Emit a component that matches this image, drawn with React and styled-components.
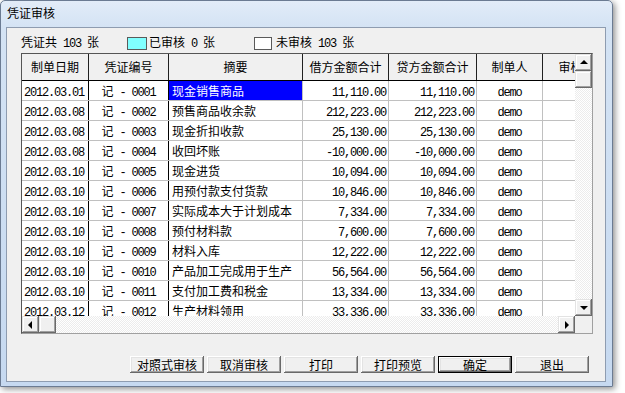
import React from "react";
import styled, { createGlobalStyle, css } from "styled-components";

const GlobalStyle = createGlobalStyle`
  html, body { margin: 0; padding: 0; background: #fff; }
  body {
    font-family: "Noto Sans CJK SC", "Liberation Sans", sans-serif;
    font-size: 12px;
    color: #000;
  }
`;

const Screen = styled.div`
  width: 625px;
  height: 393px;
  overflow: hidden;
  background: #fff;
`;

const Window = styled.div`
  box-sizing: border-box;
  width: 613px;
  height: 387px;
  border: 1px solid #6b7b92;
  border-radius: 5px 5px 0 0;
  background: linear-gradient(to bottom, #e2ecf8 0, #d4e3f4 26px, #c6d9f0 100%);
  box-shadow: 2px 2px 6px rgba(0, 0, 0, 0.45);
  padding: 0 6px 4px 5px;
  display: flex;
  flex-direction: column;
`;

const TitleBar = styled.div`
  height: 26px;
  line-height: 24px;
  padding-left: 1px;
  font-size: 12px;
  color: #000;
  flex: none;
`;

const Client = styled.div`
  box-sizing: border-box;
  height: 355px;
  border: 1px solid #8e9cb0;
  background: #f0f0f0;
  padding: 8px 0 0 14px;
  display: flex;
  flex-direction: column;
`;

const LegendRow = styled.div`
  height: 14px;
  display: flex;
  align-items: center;
  line-height: 14px;
  white-space: nowrap;
`;

const Swatch = styled.span`
  box-sizing: border-box;
  width: ${(p) => p.$w}px;
  height: 13px;
  margin-left: ${(p) => p.$ml}px;
  margin-right: ${(p) => p.$mr}px;
  background: ${(p) => p.$color};
  border: 1px solid #5a5a5a;
  flex: none;
`;

const Mono = styled.span`
  font-family: "Liberation Mono", "DejaVu Sans Mono", monospace;
  font-size: 12px;
  letter-spacing: -1.2px;
  white-space: pre;
`;

const GridFrame = styled.div`
  box-sizing: border-box;
  margin-top: 3px;
  width: 572px;
  height: 281px;
  border: 1px solid;
  border-color: #555 #a0a0a0 #a0a0a0 #555;
  display: flex;
  flex-direction: column;
  background: #fff;
`;

const GridBody = styled.div`
  display: flex;
  height: 262px;
`;

const Viewport = styled.div`
  flex: 1;
  overflow: hidden;
  background: #fff;
`;

const HeaderRow = styled.div`
  display: flex;
  width: max-content;
  height: 27px;
  border-bottom: 1px solid #000;
  box-sizing: border-box;
  background: #f0f0f0;
`;

const HeaderCell = styled.div`
  box-sizing: border-box;
  width: ${(p) => p.$w}px;
  flex: none;
  border-right: 1px solid #202020;
  line-height: 26px;
  text-align: center;
  white-space: nowrap;
  overflow: hidden;
`;

const DataRow = styled.div`
  display: flex;
  width: max-content;
  height: 20px;
  box-sizing: border-box;
  border-bottom: 1px solid #c0c0c0;
`;

const Cell = styled.div`
  box-sizing: border-box;
  width: ${(p) => p.$w}px;
  flex: none;
  height: 19px;
  line-height: 19px;
  border-right: 1px solid ${(p) => (p.$dark ? "#000" : "#c0c0c0")};
  text-align: ${(p) => p.$align || "left"};
  padding: 0 ${(p) => (p.$align === "right" ? 2 : 0)}px 0
    ${(p) => (p.$align === "left" ? p.$pl || 2 : 0)}px;
  white-space: nowrap;
  overflow: hidden;
  background: #fff;
  color: #000;
  ${(p) =>
    p.$selected &&
    css`
      background: #0000ff;
      color: #fff;
    `}
`;

const VScroll = styled.div`
  width: 17px;
  flex: none;
  display: flex;
  flex-direction: column;
`;

const HScrollRow = styled.div`
  display: flex;
  height: 17px;
`;

const HScroll = styled.div`
  flex: 1;
  display: flex;
`;

const ScrollPart = styled.div`
  box-sizing: border-box;
  width: 17px;
  height: 17px;
  flex: none;
  background: #f0f0f0;
  box-shadow: inset -1px -1px #696969, inset 1px 1px #e3e3e3,
    inset -2px -2px #a0a0a0, inset 2px 2px #fff;
  display: flex;
  align-items: center;
  justify-content: center;
`;

const Track = styled.div`
  flex: 1;
  background-color: #fff;
  background-image: repeating-conic-gradient(#ececec 0 25%, #fff 0 50%);
  background-size: 2px 2px;
`;

const Corner = styled.div`
  width: 17px;
  height: 17px;
  flex: none;
  background: #f0f0f0;
`;

const Arrow = styled.span`
  width: 0;
  height: 0;
  ${(p) =>
    p.$dir === "up" &&
    css`
      border-left: 4px solid transparent;
      border-right: 4px solid transparent;
      border-bottom: 4px solid #000;
      margin-top: -1px;
    `}
  ${(p) =>
    p.$dir === "down" &&
    css`
      border-left: 4px solid transparent;
      border-right: 4px solid transparent;
      border-top: 4px solid #000;
    `}
  ${(p) =>
    p.$dir === "left" &&
    css`
      border-top: 4px solid transparent;
      border-bottom: 4px solid transparent;
      border-right: 4px solid #000;
      margin-left: -1px;
    `}
  ${(p) =>
    p.$dir === "right" &&
    css`
      border-top: 4px solid transparent;
      border-bottom: 4px solid transparent;
      border-left: 4px solid #000;
    `}
`;

const ButtonRow = styled.div`
  margin-top: 22px;
  padding-right: 16px;
  display: flex;
  justify-content: flex-end;
  gap: 3px;
`;

const Button = styled.button`
  box-sizing: border-box;
  width: 74px;
  height: 17px;
  margin: 0;
  padding: 0;
  border: none;
  background: #f0f0f0;
  font-family: "Noto Sans CJK SC", sans-serif;
  font-size: 12px;
  line-height: 15px;
  color: #000;
  box-shadow: inset -1px -1px #696969, inset 1px 1px #fff,
    inset -2px -2px #a0a0a0, inset 2px 2px #e3e3e3;
  ${(p) =>
    p.$default &&
    css`
      border: 1px solid #000;
    `}
`;

const columns = [
  { title: "制单日期", w: 67 },
  { title: "凭证编号", w: 80 },
  { title: "摘要", w: 134 },
  { title: "借方金额合计", w: 86 },
  { title: "贷方金额合计", w: 88 },
  { title: "制单人", w: 66 },
  { title: "审核", w: 56 },
];

const rows = [
  ["2012.03.01", "0001", "现金销售商品", "11,110.00"],
  ["2012.03.08", "0002", "预售商品收余款", "212,223.00"],
  ["2012.03.08", "0003", "现金折扣收款", "25,130.00"],
  ["2012.03.08", "0004", "收回坏账", "-10,000.00"],
  ["2012.03.10", "0005", "现金进货", "10,094.00"],
  ["2012.03.10", "0006", "用预付款支付货款", "10,846.00"],
  ["2012.03.10", "0007", "实际成本大于计划成本", "7,334.00"],
  ["2012.03.10", "0008", "预付材料款", "7,600.00"],
  ["2012.03.10", "0009", "材料入库", "12,222.00"],
  ["2012.03.10", "0010", "产品加工完成用于生产", "56,564.00"],
  ["2012.03.10", "0011", "支付加工费和税金", "13,334.00"],
  ["2012.03.12", "0012", "生产材料领用", "33,336.00"],
];

const buttons = ["对照式审核", "取消审核", "打印", "打印预览", "确定", "退出"];

export default function App() {
  return (
    <Screen>
      <GlobalStyle />
      <Window>
        <TitleBar>凭证审核</TitleBar>
        <Client>
          <LegendRow>
            <span>
              凭证共<Mono> 103 </Mono>张
            </span>
            <Swatch $w={20} $ml={28} $mr={2} $color="#80ffff" />
            <span>
              已审核<Mono> 0 </Mono>张
            </span>
            <Swatch $w={18} $ml={39} $mr={4} $color="#fff" />
            <span>
              未审核<Mono> 103 </Mono>张
            </span>
          </LegendRow>

          <GridFrame>
            <GridBody>
              <Viewport>
                <HeaderRow>
                  {columns.map((c) => (
                    <HeaderCell key={c.title} $w={c.w}>
                      {c.title}
                    </HeaderCell>
                  ))}
                </HeaderRow>
                {rows.map(([date, no, memo, amount], i) => (
                  <DataRow key={no}>
                    <Cell $w={67} $dark $align="left" $pl={2}>
                      <Mono>{date}</Mono>
                    </Cell>
                    <Cell $w={80} $dark $align="center">
                      记<Mono> - {no}</Mono>
                    </Cell>
                    <Cell $w={134} $align="left" $pl={3} $selected={i === 0}>
                      {memo}
                    </Cell>
                    <Cell $w={86} $align="right">
                      <Mono>{amount}</Mono>
                    </Cell>
                    <Cell $w={88} $align="right">
                      <Mono>{amount}</Mono>
                    </Cell>
                    <Cell $w={66} $align="center">
                      <Mono>demo</Mono>
                    </Cell>
                    <Cell $w={56} $align="center" />
                  </DataRow>
                ))}
              </Viewport>
              <VScroll>
                <ScrollPart>
                  <Arrow $dir="up" />
                </ScrollPart>
                <ScrollPart />
                <Track />
                <ScrollPart>
                  <Arrow $dir="down" />
                </ScrollPart>
              </VScroll>
            </GridBody>
            <HScrollRow>
              <HScroll>
                <ScrollPart>
                  <Arrow $dir="left" />
                </ScrollPart>
                <ScrollPart />
                <Track />
                <ScrollPart>
                  <Arrow $dir="right" />
                </ScrollPart>
              </HScroll>
              <Corner />
            </HScrollRow>
          </GridFrame>

          <ButtonRow>
            {buttons.map((b) => (
              <Button key={b} $default={b === "确定"}>
                {b}
              </Button>
            ))}
          </ButtonRow>
        </Client>
      </Window>
    </Screen>
  );
}
